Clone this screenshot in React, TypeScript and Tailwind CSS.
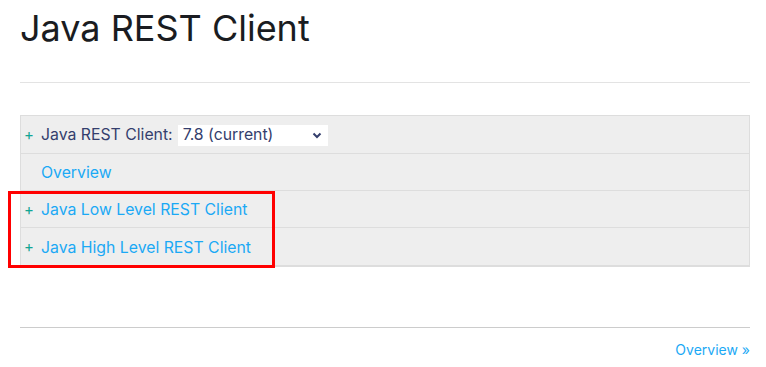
import type React from "react"

const rows = [
    { label: "Overview", plus: false },
    { label: "Java Low Level REST Client", plus: true },
    { label: "Java High Level REST Client", plus: true },
]

const App: React.FC = () => {
    return (
        <div className="relative w-[766px] h-[367px] bg-white font-['Inter','Noto_Sans',sans-serif] overflow-hidden">
            <div className="pl-5 w-[750px]">
                <h1 className="text-[36px] leading-[44px] pt-[6px] text-[#1a1c21] font-normal">Java REST Client</h1>
                <hr className="mt-[32px] border-t border-[#e3e3e3]" />

                <div className="mt-[32px] bg-[#eeeeee] border border-[#dddddd] border-b-2 text-[15.8px]">
                    <div className="h-[38px] flex items-center pt-[1px] border-b border-[#dddddd]">
                        <span className="w-[20px] pl-[3px] text-[15px] text-[#12a594]">+</span>
                        <span className="text-[#343e6d]">Java REST Client:</span>
                        <div className="ml-[5px] w-[150px] h-[21px] bg-white flex items-center justify-between pl-[5px] pr-[6px] text-[#343e6d]">
                            <span>7.8 (current)</span>
                            <svg width="10" height="7" viewBox="0 0 10 7">
                                <path d="M1.5 1.5 L5 5 L8.5 1.5" fill="none" stroke="#343e6d" strokeWidth="2" />
                            </svg>
                        </div>
                    </div>
                    {rows.map((row, i) => (
                        <div
                            key={i}
                            className={`h-[37px] flex items-center pt-[2px] ${i < rows.length - 1 ? "border-b border-[#dddddd]" : ""}`}
                        >
                            <span className="w-[20px] pl-[3px] text-[15px] text-[#12a594]">{row.plus ? "+" : ""}</span>
                            <a className="text-[#1ba9f5]">{row.label}</a>
                        </div>
                    ))}
                </div>

                <hr className="mt-[60px] border-t border-[#cccccc]" />
                <div className="flex justify-end pt-[11px]">
                    <a className="text-[14px] text-[#1ba9f5]">Overview »</a>
                </div>
            </div>

            {/* annotation frame */}
            <div className="absolute left-[8px] top-[191px] w-[267px] h-[77px] border-[3px] border-[#ff0000]" />
        </div>
    )
}

export default App
